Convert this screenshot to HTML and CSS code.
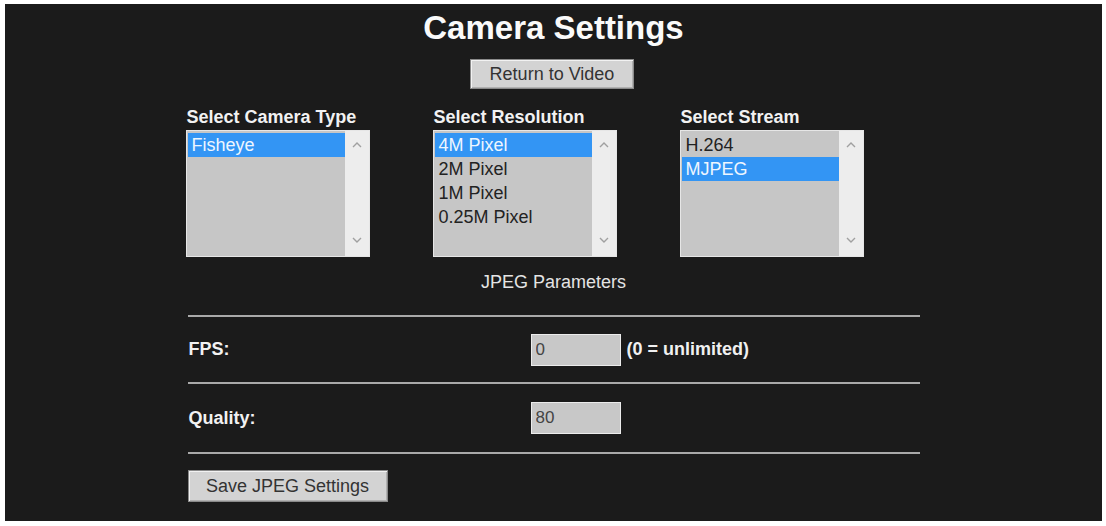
FILE: index.html
```html
<!DOCTYPE html>
<html lang="en">
<head>
  <meta charset="UTF-8">
  <meta name="viewport" content="width=device-width, initial-scale=1.0">
  <title>Camera Settings</title>
  <link rel="stylesheet" href="styles.css">
</head>
<body>
  <div class="panel">
    <h1>Camera Settings</h1>
    <div class="center">
      <button class="btn btn-return">Return to Video</button>
    </div>

    <div class="content">
      <div class="pickers">
        <div class="picker">
          <div class="picker-label">Select Camera Type</div>
          <div class="listbox">
            <ul class="options">
              <li class="selected">Fisheye</li>
            </ul>
            <div class="scroll">
              <svg width="10" height="7" viewBox="0 0 10 7"><polyline points="1,6 5,2 9,6" /></svg>
              <svg width="10" height="7" viewBox="0 0 10 7"><polyline points="1,1 5,5 9,1" /></svg>
            </div>
          </div>
        </div>
        <div class="picker">
          <div class="picker-label">Select Resolution</div>
          <div class="listbox">
            <ul class="options">
              <li class="selected">4M Pixel</li>
              <li>2M Pixel</li>
              <li>1M Pixel</li>
              <li>0.25M Pixel</li>
            </ul>
            <div class="scroll">
              <svg width="10" height="7" viewBox="0 0 10 7"><polyline points="1,6 5,2 9,6" /></svg>
              <svg width="10" height="7" viewBox="0 0 10 7"><polyline points="1,1 5,5 9,1" /></svg>
            </div>
          </div>
        </div>
        <div class="picker">
          <div class="picker-label">Select Stream</div>
          <div class="listbox">
            <ul class="options">
              <li>H.264</li>
              <li class="selected">MJPEG</li>
            </ul>
            <div class="scroll">
              <svg width="10" height="7" viewBox="0 0 10 7"><polyline points="1,6 5,2 9,6" /></svg>
              <svg width="10" height="7" viewBox="0 0 10 7"><polyline points="1,1 5,5 9,1" /></svg>
            </div>
          </div>
        </div>
      </div>

      <div class="section-title">JPEG Parameters</div>

      <hr class="rule rule-first">
      <div class="field field-fps">
        <label class="field-label" for="fps">FPS:</label>
        <input class="field-input" id="fps" type="text" value="0">
        <span class="hint">(0 = unlimited)</span>
      </div>
      <hr class="rule">
      <div class="field field-quality">
        <label class="field-label" for="quality">Quality:</label>
        <input class="field-input" id="quality" type="text" value="80">
      </div>
      <hr class="rule">

      <button class="btn btn-save">Save JPEG Settings</button>
    </div>
  </div>
</body>
</html>
```

FILE: styles.css
```css
* {
  box-sizing: border-box;
}
html, body {
  margin: 0;
  background-color: #fff;
}
body {
  padding: 4px 4px 5px 5px;
  font-family: "Liberation Sans", Arial, sans-serif;
  font-size: 18px;
}
.panel {
  height: 517px;
  padding-top: 5px;
  background-color: #1b1b1b;
  color: #f0f0f0;
}
h1 {
  margin: 0 0 12px;
  font-size: 33px;
  line-height: 38px;
  text-align: center;
  color: #fafafa;
}
.center {
  text-align: center;
}
.btn {
  font-family: inherit;
  font-size: 18px;
  color: #333;
  background-color: #d3d3d3;
  border: 1px solid #8a8a8a;
  box-shadow: inset 1px 1px 0 #f2f2f2, inset -1px -1px 0 #b0b0b0;
  padding: 0;
}
.btn-return {
  width: 164px;
  height: 30px;
  margin-right: 3px;
}
.content {
  width: 732px;
  margin: 0 auto;
}

/* three list boxes side by side */
.pickers {
  display: grid;
  grid-template-columns: 247px 247px 247px;
  margin: 18px 0 0 -2px;
}
.picker-label {
  font-weight: bold;
  line-height: 20px;
  margin-bottom: 3px;
  padding-left: 1px;
  color: #f2f2f2;
}
.listbox {
  display: flex;
  width: 184px;
  height: 127px;
  border: 1px solid #e6e6e6;
  background-color: #c6c6c6;
}
.options {
  flex: 1;
  list-style: none;
  margin: 0;
  padding: 2px 0 0 1px;
}
.options li {
  line-height: 24px;
  padding-left: 4px;
  color: #222;
}
.options li.selected {
  background-color: #3395f4;
  color: #eef6ff;
}
.scroll {
  width: 24px;
  display: flex;
  flex-direction: column;
  justify-content: space-between;
  align-items: center;
  padding: 10px 0 12px;
  background-color: #ededed;
}
.scroll polyline {
  fill: none;
  stroke: #a0a0a0;
  stroke-width: 1.4;
}

.section-title {
  margin-top: 15px;
  line-height: 20px;
  text-align: center;
  color: #e4e4e4;
}
.rule {
  border: 0;
  height: 2px;
  margin: 0;
  background-color: #a9a9a9;
}
.rule-first {
  margin-top: 23px;
}
.field {
  display: flex;
  align-items: center;
}
.field-fps {
  height: 65px;
}
.field-quality {
  height: 68px;
}
.field-label {
  width: 343px;
  padding-left: 1px;
  font-weight: bold;
  color: #f2f2f2;
}
.field-input {
  width: 90px;
  height: 32px;
  padding: 0 4px;
  font-family: inherit;
  font-size: 17px;
  color: #444;
  background-color: #c8c8c8;
  border: 1px solid #ececec;
  outline: none;
}
.hint {
  margin-left: 6px;
  font-weight: bold;
  color: #f0f0f0;
}
.btn-save {
  margin-top: 16px;
  width: 200px;
  height: 32px;
}
```
